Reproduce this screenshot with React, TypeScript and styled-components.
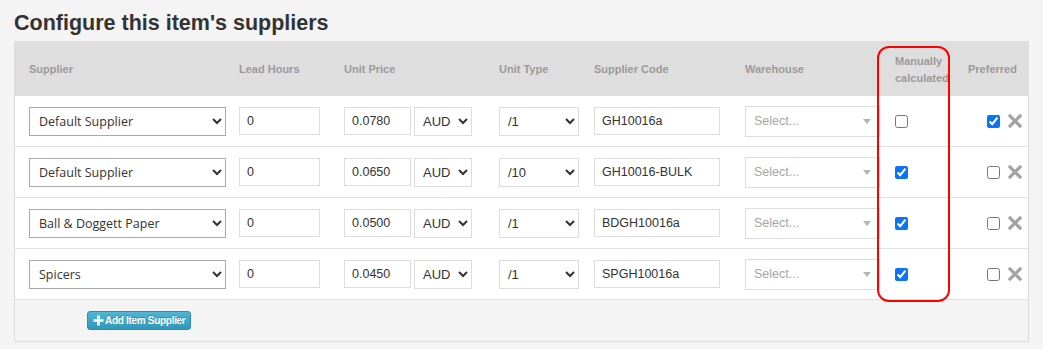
import React from 'react'
import styled, { createGlobalStyle } from 'styled-components'

const GlobalStyle = createGlobalStyle`
  body {
    margin: 0;
    background: #f4f4f4;
    font-family: "Liberation Sans", Arial, sans-serif;
    color: #333;
  }
`

const COLUMNS = '210px 105px 155px 95px 151px 150px 73px 1fr'

type Supplier = {
  name: string
  price: string
  unit: string
  code: string
  manual: boolean
  preferred: boolean
}

const SUPPLIERS: Supplier[] = [
  { name: 'Default Supplier', price: '0.0780', unit: '/1', code: 'GH10016a', manual: false, preferred: true },
  { name: 'Default Supplier', price: '0.0650', unit: '/10', code: 'GH10016-BULK', manual: true, preferred: false },
  { name: 'Ball & Doggett Paper', price: '0.0500', unit: '/1', code: 'BDGH10016a', manual: true, preferred: false },
  { name: 'Spicers', price: '0.0450', unit: '/1', code: 'SPGH10016a', manual: true, preferred: false },
]

const Page = styled.div`
  padding: 11px 14px 8px 14px;
`

const Title = styled.h1`
  margin: 0 0 5px 0;
  font-size: 21.5px;
  font-weight: bold;
  line-height: 25px;
  color: #333;
`

const Panel = styled.div`
  position: relative;
  border: 1px solid #dcdcdc;
  border-top: none;
  background: #fff;
`

const HeaderRow = styled.div`
  display: grid;
  grid-template-columns: ${COLUMNS};
  align-items: center;
  height: 55px;
  padding-left: 14px;
  background: #dedede;
`

const HeadCell = styled.div<{ $right?: boolean }>`
  font-size: 11px;
  font-weight: bold;
  color: #9a9a9a;
  line-height: 17px;
  padding-top: 2px;
  text-align: ${p => (p.$right ? 'right' : 'left')};
  padding-right: ${p => (p.$right ? '12px' : '0')};
`

const Row = styled.div`
  display: grid;
  grid-template-columns: ${COLUMNS};
  align-items: center;
  height: 51px;
  padding-left: 14px;
  border-bottom: 1px solid #e2e2e2;
  box-sizing: border-box;
`

const Cell = styled.div`
  display: flex;
  align-items: center;
  gap: 3px;
`

const Select = styled.select<{ $width: number; $open?: boolean }>`
  width: ${p => p.$width}px;
  height: 29px;
  box-sizing: border-box;
  border: 1px solid ${p => (p.$open ? '#a9a9a9' : '#dddddd')};
  border-radius: 0;
  background: #fff;
  padding: 0 0 0 ${p => (p.$open ? '5px' : '4px')};
  font-family: ${p => (p.$open ? '"Open Sans", sans-serif' : '"Liberation Sans", Arial, sans-serif')};
  font-size: ${p => (p.$open ? '12.5px' : '13px')};
  color: #333;
`

const Input = styled.input<{ $width: number }>`
  width: ${p => p.$width}px;
  height: 28px;
  box-sizing: border-box;
  border: 1px solid #dddddd;
  padding: 0 7px;
  font-family: "Liberation Sans", Arial, sans-serif;
  font-size: 12.5px;
  color: #333;
`

const Picker = styled.div`
  width: 135px;
  height: 31px;
  box-sizing: border-box;
  border: 1px solid #dddddd;
  display: flex;
  align-items: center;
  justify-content: space-between;
  padding: 0 8px 0 8px;
  font-size: 12.5px;
  color: #a6a6a6;
`

const Caret = styled.span`
  width: 0;
  height: 0;
  border-left: 4px solid transparent;
  border-right: 4px solid transparent;
  border-top: 5px solid #b5b5b5;
`

const Check = styled.input`
  width: 13px;
  height: 13px;
  margin: 0;
  accent-color: #0b74f5;
`

const ActionCell = styled.div`
  display: flex;
  align-items: center;
  justify-content: flex-end;
  gap: 8px;
  padding-right: 6px;
`

const Remove = styled.button`
  border: 0;
  background: none;
  padding: 0;
  display: flex;
  cursor: pointer;
`

const Footer = styled.div`
  height: 41px;
  background: #f4f4f4;
  display: flex;
  align-items: center;
  padding-left: 72px;
`

const AddButton = styled.button`
  display: flex;
  align-items: center;
  gap: 1px;
  height: 19px;
  padding: 0 5px 0 5px;
  border: 1px solid #2a8eae;
  border-radius: 3px;
  background: linear-gradient(#4fb6d4, #2f97b8);
  color: #fff;
  font-family: "Liberation Sans", Arial, sans-serif;
  font-size: 10px;
  font-weight: bold;
  letter-spacing: -0.3px;
  text-shadow: 0 -1px 0 rgba(0, 0, 0, 0.25);
  cursor: pointer;
`

const Highlight = styled.div`
  position: absolute;
  left: 862px;
  top: 5px;
  width: 69px;
  height: 252px;
  border: 2px solid #f00;
  border-radius: 12px;
  pointer-events: none;
`

const Cross = () => (
  <svg width="14" height="14" viewBox="0 0 14 14">
    <path d="M2 2 L12 12 M12 2 L2 12" stroke="#a3a3a3" strokeWidth="3.2" strokeLinecap="square" />
  </svg>
)

const Plus = () => (
  <svg width="11" height="11" viewBox="0 0 11 11">
    <path d="M5.5 0.5 V10.5 M0.5 5.5 H10.5" stroke="#fff" strokeWidth="2.6" />
  </svg>
)

const SupplierRow = ({ v }: { v: Supplier }) => (
  <Row>
    <Cell>
      <Select $width={197} $open defaultValue={v.name}>
        <option>Default Supplier</option>
        <option>Ball &amp; Doggett Paper</option>
        <option>Spicers</option>
      </Select>
    </Cell>
    <Cell>
      <Input $width={81} defaultValue="0" />
    </Cell>
    <Cell>
      <Input $width={67} defaultValue={v.price} />
      <Select $width={58} defaultValue="AUD">
        <option>AUD</option>
      </Select>
    </Cell>
    <Cell>
      <Select $width={80} defaultValue={v.unit}>
        <option>/1</option>
        <option>/10</option>
      </Select>
    </Cell>
    <Cell>
      <Input $width={126} defaultValue={v.code} />
    </Cell>
    <Cell>
      <Picker>
        Select...
        <Caret />
      </Picker>
    </Cell>
    <Cell>
      <Check type="checkbox" defaultChecked={v.manual} />
    </Cell>
    <ActionCell>
      <Check type="checkbox" defaultChecked={v.preferred} />
      <Remove aria-label="Remove supplier">
        <Cross />
      </Remove>
    </ActionCell>
  </Row>
)

export default function App() {
  return (
    <Page>
      <GlobalStyle />
      <Title>Configure this item's suppliers</Title>
      <Panel>
        <HeaderRow>
          <HeadCell>Supplier</HeadCell>
          <HeadCell>Lead Hours</HeadCell>
          <HeadCell>Unit Price</HeadCell>
          <HeadCell>Unit Type</HeadCell>
          <HeadCell>Supplier Code</HeadCell>
          <HeadCell>Warehouse</HeadCell>
          <HeadCell>
            Manually
            <br />
            calculated
          </HeadCell>
          <HeadCell $right>Preferred</HeadCell>
        </HeaderRow>
        {SUPPLIERS.map((v, i) => (
          <SupplierRow key={i} v={v} />
        ))}
        <Footer>
          <AddButton>
            <Plus />
            Add Item Supplier
          </AddButton>
        </Footer>
        <Highlight />
      </Panel>
    </Page>
  )
}
